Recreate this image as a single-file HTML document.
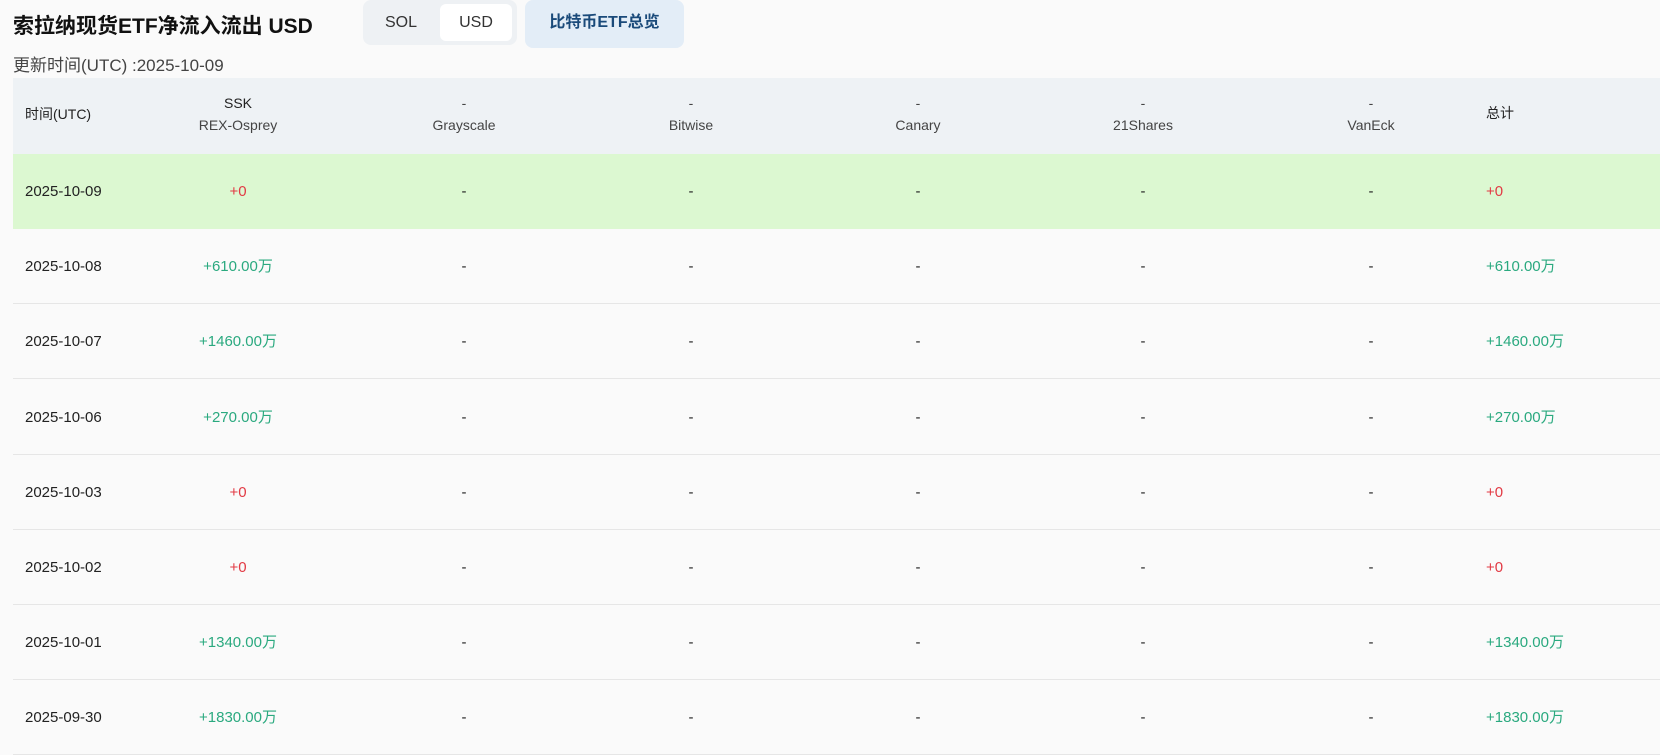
<!DOCTYPE html>
<html><head><meta charset="utf-8"><style>
*{margin:0;padding:0;box-sizing:border-box}
body{width:1660px;height:730px;overflow:hidden;background:#fafafa;font-family:"Liberation Sans","Noto Sans CJK SC",sans-serif;color:#222;position:relative}
.title{position:absolute;left:13px;top:10px;font-size:21px;font-weight:bold;color:#111}
.tog{position:absolute;left:363px;top:0;width:154px;height:45px;background:#eef1f4;border-radius:8px}
.tog span{position:absolute;top:4px;height:37px;line-height:37px;font-size:16px;color:#333;text-align:center}
.tog .a{left:6px;width:64px}
.tog .b{left:77px;width:72px;background:#fff;border-radius:6px}
.btn{position:absolute;left:525px;top:0;width:159px;height:48px;background:#e3edf7;border-radius:8px;color:#1a4a7a;font-weight:bold;font-size:16px;line-height:46px;text-align:center}
.upd{position:absolute;left:13px;top:51px;font-size:17px;color:#444}
.hdr{position:absolute;left:13px;top:78px;width:1647px;height:76px;background:#eef2f5}
.row{position:absolute;left:13px;width:1647px;height:75px;border-bottom:1px solid #e6e6e6}
.c{position:absolute;transform:translateX(-50%);white-space:nowrap;text-align:center}
.l{position:absolute;white-space:nowrap}
.h{font-size:14px;color:#444;line-height:22px}
.d{font-size:15px;top:0;height:75px;line-height:75px}
.g{color:#2aa97f}.r{color:#e23a44}
</style></head><body>
<div class="title">索拉纳现货ETF净流入流出 USD</div>
<div class="tog"><span class="a">SOL</span><span class="b">USD</span></div>
<div class="btn">比特币ETF总览</div>
<div class="upd">更新时间(UTC) :2025-10-09</div>
<div class="hdr">
<div class="l h" style="left:12px;top:25px;color:#222">时间(UTC)</div>
<div class="c h" style="left:225px;top:14px"><span style="color:#222">SSK</span><br>REX-Osprey</div>
<div class="c h" style="left:451px;top:14px">-<br>Grayscale</div>
<div class="c h" style="left:678px;top:14px">-<br>Bitwise</div>
<div class="c h" style="left:905px;top:14px">-<br>Canary</div>
<div class="c h" style="left:1130px;top:14px">-<br>21Shares</div>
<div class="c h" style="left:1358px;top:14px">-<br>VanEck</div>
<div class="l h" style="left:1473px;top:24px;color:#222">总计</div>
</div>
<div id="rows"></div>
<script>
var d=[["2025-10-09","+0","r"],["2025-10-08","+610.00万","g"],["2025-10-07","+1460.00万","g"],["2025-10-06","+270.00万","g"],["2025-10-03","+0","r"],["2025-10-02","+0","r"],["2025-10-01","+1340.00万","g"],["2025-09-30","+1830.00万","g"]];
var h="";
d.forEach(function(x,i){
var top=154+i*75.2;
h+='<div class="row" style="top:'+top+'px;'+(i==0?'background:#dcf8d1;border-bottom:none':'')+'">'+
'<div class="l d" style="left:12px">'+x[0]+'</div>'+
'<div class="c d '+x[2]+'" style="left:225px">'+x[1]+'</div>';
[451,678,905,1130,1358].forEach(function(p){h+='<div class="c d" style="left:'+p+'px">-</div>'});
h+='<div class="l d '+x[2]+'" style="left:1473px">'+x[1]+'</div></div>';
});
document.getElementById("rows").innerHTML=h;
</script>
</body></html>
